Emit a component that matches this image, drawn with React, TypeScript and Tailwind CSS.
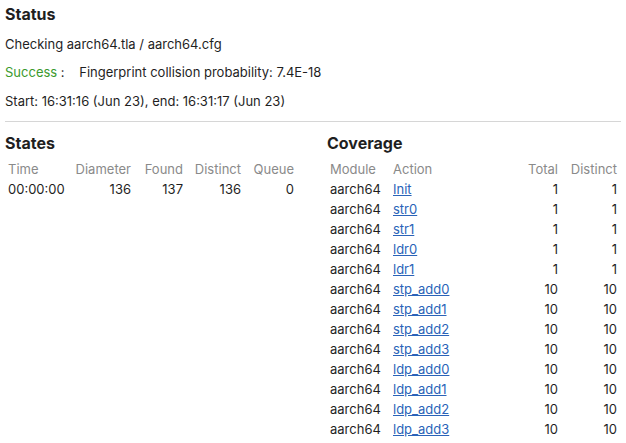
import React from 'react';

const actions = [
  { name: 'Init', total: 1, distinct: 1 },
  { name: 'str0', total: 1, distinct: 1 },
  { name: 'str1', total: 1, distinct: 1 },
  { name: 'ldr0', total: 1, distinct: 1 },
  { name: 'ldr1', total: 1, distinct: 1 },
  { name: 'stp_add0', total: 10, distinct: 10 },
  { name: 'stp_add1', total: 10, distinct: 10 },
  { name: 'stp_add2', total: 10, distinct: 10 },
  { name: 'stp_add3', total: 10, distinct: 10 },
  { name: 'ldp_add0', total: 10, distinct: 10 },
  { name: 'ldp_add1', total: 10, distinct: 10 },
  { name: 'ldp_add2', total: 10, distinct: 10 },
  { name: 'ldp_add3', total: 10, distinct: 10 },
];

const App: React.FC = () => {
  return (
    <div className="min-h-screen bg-white text-[13px] text-[#1f1f1f] font-['Inter',sans-serif] px-[5px]">
      {/* Status */}
      <section className="pb-[10px] border-b border-[#d6d6d6]">
        <h2 className="text-[16px] font-bold leading-[28px]">Status</h2>
        <p className="leading-[20px] mt-[6px]">Checking aarch64.tla / aarch64.cfg</p>
        <p className="leading-[20px] mt-[8px]">
          <span className="text-[#3b9a2d]">Success</span>
          <span> :&nbsp;&nbsp;&nbsp; Fingerprint collision probability: 7.4E-18</span>
        </p>
        <p className="leading-[20px] mt-[9px]">Start: 16:31:16 (Jun 23), end: 16:31:17 (Jun 23)</p>
      </section>

      <div className="flex pt-[9px]">
        {/* States */}
        <section className="w-[322px]">
          <h2 className="text-[16px] font-bold leading-[24px]">States</h2>
          <table className="mt-[5px] border-collapse">
            <thead>
              <tr className="h-[20px] text-[#8a8a8a]">
                <th className="w-[66px] px-[3px] text-left font-normal">Time</th>
                <th className="w-[63px] px-[3px] text-right font-normal">Diameter</th>
                <th className="w-[52px] px-[3px] text-right font-normal">Found</th>
                <th className="w-[58px] px-[3px] text-right font-normal">Distinct</th>
                <th className="w-[53px] px-[3px] text-right font-normal">Queue</th>
              </tr>
            </thead>
            <tbody>
              <tr className="h-[20px]">
                <td className="px-[3px]">00:00:00</td>
                <td className="px-[3px] text-right">136</td>
                <td className="px-[3px] text-right">137</td>
                <td className="px-[3px] text-right">136</td>
                <td className="px-[3px] text-right">0</td>
              </tr>
            </tbody>
          </table>
        </section>

        {/* Coverage */}
        <section className="flex-1">
          <h2 className="text-[16px] font-bold leading-[24px]">Coverage</h2>
          <table className="mt-[5px] border-collapse">
            <thead>
              <tr className="h-[20px] text-[#8a8a8a]">
                <th className="w-[63px] px-[3px] text-left font-normal">Module</th>
                <th className="w-[120px] px-[3px] text-left font-normal">Action</th>
                <th className="w-[51px] px-[3px] text-right font-normal">Total</th>
                <th className="w-[59px] px-[3px] text-right font-normal">Distinct</th>
              </tr>
            </thead>
            <tbody>
              {actions.map((a) => (
                <tr key={a.name} className="h-[20px]">
                  <td className="px-[3px]">aarch64</td>
                  <td className="px-[3px]">
                    <a href="#" className="text-[#2a63b8] underline">{a.name}</a>
                  </td>
                  <td className="px-[3px] text-right">{a.total}</td>
                  <td className="px-[3px] text-right">{a.distinct}</td>
                </tr>
              ))}
            </tbody>
          </table>
        </section>
      </div>
    </div>
  );
};

export default App;
